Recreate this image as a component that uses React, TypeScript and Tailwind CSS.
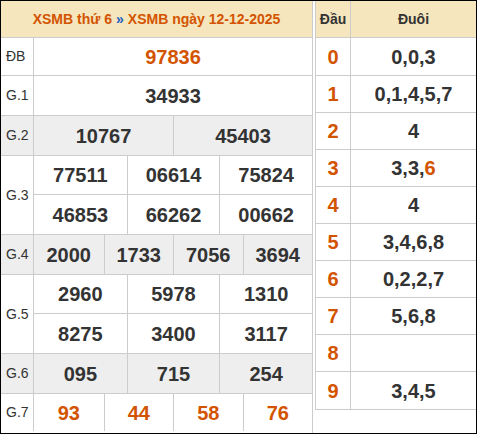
import React from 'react';

type Prize = {
    label: string;
    rows: string[][];
    gray?: boolean;
    orange?: boolean;
    h: string;
};

const prizes: Prize[] = [
    { label: 'ĐB', rows: [['97836']], orange: true, h: 'h-[37px]' },
    { label: 'G.1', rows: [['34933']], h: 'h-[39px]' },
    { label: 'G.2', rows: [['10767', '45403']], gray: true, h: 'h-[39px]' },
    { label: 'G.3', rows: [['77511', '06614', '75824'], ['46853', '66262', '00662']], h: 'h-[39px]' },
    { label: 'G.4', rows: [['2000', '1733', '7056', '3694']], gray: true, h: 'h-[39px]' },
    { label: 'G.5', rows: [['2960', '5978', '1310'], ['8275', '3400', '3117']], h: 'h-[39px]' },
    { label: 'G.6', rows: [['095', '715', '254']], gray: true, h: 'h-[39px]' },
    { label: 'G.7', rows: [['93', '44', '58', '76']], orange: true, h: 'h-[37px]' },
];

const colsClass: Record<number, string> = {
    1: 'grid-cols-1',
    2: 'grid-cols-2',
    3: 'grid-cols-3',
    4: 'grid-cols-4',
};

const loto: { head: string; tail: React.ReactNode }[] = [
    { head: '0', tail: '0,0,3' },
    { head: '1', tail: '0,1,4,5,7' },
    { head: '2', tail: '4' },
    { head: '3', tail: <>3,3,<span className="text-[#d35400]">6</span></> },
    { head: '4', tail: '4' },
    { head: '5', tail: '3,4,6,8' },
    { head: '6', tail: '0,2,2,7' },
    { head: '7', tail: '5,6,8' },
    { head: '8', tail: '' },
    { head: '9', tail: '3,4,5' },
];

const PrizeRow: React.FC<{ prize: Prize; last: boolean }> = ({ prize, last }) => (
    <div className={`flex ${prize.gray ? 'bg-[#eeeeee]' : 'bg-white'} ${last ? '' : 'border-b border-[#cccccc]'}`}>
        <div className="w-[33px] shrink-0 border-r border-[#cccccc] flex items-center pl-[5px] text-[14px] text-[#333]">
            {prize.label}
        </div>
        <div className="flex-1 flex flex-col">
            {prize.rows.map((row, ri) => (
                <div
                    key={ri}
                    className={`grid ${colsClass[row.length]} ${prize.h} ${ri < prize.rows.length - 1 ? 'border-b border-[#cccccc]' : ''}`}
                >
                    {row.map((num, ci) => (
                        <div
                            key={ci}
                            className={`flex items-center justify-center font-bold text-[20px] ${prize.orange ? 'text-[#d35400]' : 'text-[#333]'} ${ci > 0 ? 'border-l border-[#cccccc]' : ''}`}
                        >
                            {num}
                        </div>
                    ))}
                </div>
            ))}
        </div>
    </div>
);

export default function App() {
    return (
        <div
            className="w-[477px] h-[434px] border border-black bg-white flex"
            style={{ fontFamily: '"Liberation Sans", Arial, sans-serif' }}
        >
            {/* Kết quả */}
            <div className="w-[312px] shrink-0 border-r border-[#cccccc] flex flex-col">
                <div className="h-[37px] bg-[#f5e6bd] border-b border-[#cccccc] flex items-center justify-center font-bold text-[14px] text-[#d35400]">
                    XSMB thứ 6 <span className="text-[#1f5fbf] mx-[4px]">»</span> XSMB ngày 12-12-2025
                </div>
                {prizes.map((p, i) => (
                    <PrizeRow key={p.label} prize={p} last={i === prizes.length - 1} />
                ))}
            </div>

            {/* Lô tô đầu đuôi */}
            <div className="ml-[2px] flex-1 self-start border-l border-b border-[#cccccc]">
                <div className="h-[37px] bg-[#f5e6bd] border-b border-[#cccccc] flex text-[14px] font-bold text-[#333]">
                    <div className="w-[35px] border-r border-[#cccccc] flex items-center justify-center">Đầu</div>
                    <div className="flex-1 flex items-center justify-center">Đuôi</div>
                </div>
                {loto.map((r, i) => (
                    <div
                        key={r.head}
                        className={`flex ${i === 0 ? 'h-[38px]' : 'h-[37px]'} ${i < loto.length - 1 ? 'border-b border-[#cccccc]' : ''} font-bold text-[20px]`}
                    >
                        <div className="w-[35px] border-r border-[#cccccc] flex items-center justify-center text-[#d35400]">
                            {r.head}
                        </div>
                        <div className="flex-1 flex items-center justify-center text-[#333]">{r.tail}</div>
                    </div>
                ))}
            </div>
        </div>
    );
}
